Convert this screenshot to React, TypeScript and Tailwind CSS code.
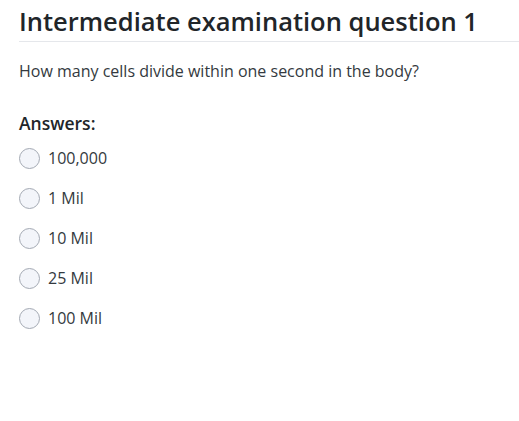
const answers = ["100,000", "1 Mil", "10 Mil", "25 Mil", "100 Mil"];

export default function App() {
  return (
    <div className="min-h-screen bg-white pl-[19px] text-[#212529] [font-family:'Open_Sans',sans-serif]">
      <h1 className="pt-[3px] text-[25.5px] font-semibold leading-[36px]">
        Intermediate examination question 1
      </h1>
      <hr className="mt-[2px] border-t border-[#e5e7eb]" />
      <p className="mt-[17px] text-[16px] leading-[24px] text-[#343a40]">
        How many cells divide within one second in the body?
      </p>
      <h2 className="mt-[28px] text-[17.5px] font-semibold leading-[24px]">Answers:</h2>
      <div className="mt-[12px] flex flex-col gap-[18px]">
        {answers.map((a) => (
          <label key={a} className="flex items-center gap-[8px] text-[16px] leading-[22px] text-[#343a40]">
            <span className="h-[21px] w-[21px] shrink-0 rounded-full border border-[#a3a9b3] bg-[#f3f5fa]" />
            {a}
          </label>
        ))}
      </div>
    </div>
  );
}
